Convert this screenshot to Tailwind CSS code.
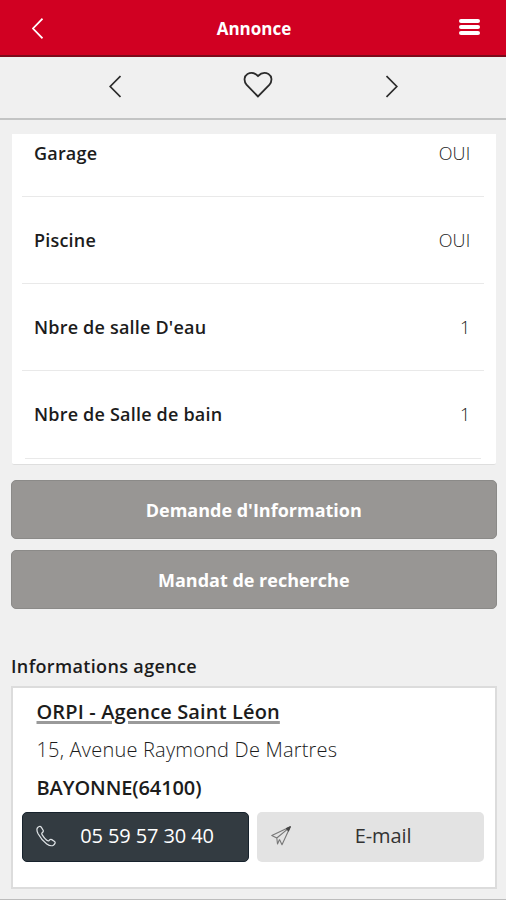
<!doctype html>
<html lang="fr">

<head>
  <meta charset="UTF-8" />
  <meta name="viewport" content="width=device-width, initial-scale=1.0" />
  <title>Annonce</title>
  <script src="https://cdn.jsdelivr.net/npm/@tailwindcss/browser@4"></script>
</head>

<body class="h-[900px] overflow-hidden bg-[#f0f0f0] font-['Open_Sans','Noto_Sans',sans-serif] text-[#1c1c1c]">
  <div class="flex h-full flex-col border-b border-[#bdbdbd]">
    <header class="grid h-[57px] shrink-0 grid-cols-3 items-center border-b-2 border-[#7d0a1b] bg-[#d10022] pl-8 pr-[26px] text-white">
      <svg class="mt-[2px] h-[21px] w-[11px]" viewBox="0 0 11 21" fill="none" stroke="currentColor" stroke-width="1.7">
        <path d="M10.5 .7 1 10.5l9.5 9.8" />
      </svg>
      <h1 class="pr-1 pt-[2px] text-center text-[17px] font-bold">Annonce</h1>
      <div class="flex flex-col gap-[2px] justify-self-end pb-px">
        <span class="h-1 w-[21px] rounded-xs bg-white"></span>
        <span class="h-1 w-[21px] rounded-xs bg-white"></span>
        <span class="h-1 w-[21px] rounded-xs bg-white"></span>
      </div>
    </header>

    <nav class="flex h-[63px] shrink-0 justify-between border-b-2 border-[#c3c4c4] pl-[109px] pr-[108px]">
      <svg class="mt-[18px] h-[23px] w-3" viewBox="0 0 12 23" fill="none" stroke="#2b2b2b" stroke-width="1.7">
        <path d="M11.5 1 1.2 11.5 11.5 22" />
      </svg>
      <svg class="ml-[9px] mt-[14px] h-[27px] w-[30px]" viewBox="0 0 30 27" fill="none" stroke="#2b2b2b" stroke-width="1.8">
        <path d="M15 25.500 3.700 14C.3 10 1.200 5 4.500 3 8.500.8 12.500 2.500 15 5c2.500-2.500 6.500-4.200 10.500-2 3.300 2 4.200 7 .8 11Z" />
      </svg>
      <svg class="mt-[18px] h-[23px] w-3" viewBox="0 0 12 23" fill="none" stroke="#2b2b2b" stroke-width="1.7">
        <path d="M.5 1 10.800 11.500.5 22" />
      </svg>
    </nav>

    <main class="pl-[11px] pr-[9.5px] pt-[14px]">
      <section class="ml-px mr-px flex h-[331px] flex-col rounded-b-xs border-b border-[#dedede] bg-white pl-[10px] pr-3 text-lg tracking-[0.2px]">
        <div class="flex h-[63px] shrink-0 justify-between border-b border-[#e9e9e9] pl-3 pr-[13px] pt-[5px]">
          <span class="font-semibold">Garage</span><span class="font-light">OUI</span>
        </div>
        <div class="flex h-[87px] shrink-0 items-center justify-between border-b border-[#e9e9e9] pl-3 pr-[13px]">
          <span class="font-semibold">Piscine</span><span class="font-light">OUI</span>
        </div>
        <div class="flex h-[87px] shrink-0 items-center justify-between border-b border-[#e9e9e9] pl-3 pr-[13px]">
          <span class="font-semibold">Nbre de salle D'eau</span><span class="font-light">1</span>
        </div>
        <div class="mx-[3px] flex h-[88px] shrink-0 items-center justify-between border-b border-[#e9e9e9] pl-[9px] pr-[10px] pb-px">
          <span class="font-semibold">Nbre de Salle de bain</span><span class="font-light">1</span>
        </div>
      </section>

      <div class="mt-[15px] flex flex-col gap-[11px] text-lg font-bold text-white">
        <button class="h-[59px] rounded-[5px] border border-[#8b8a88] bg-[#989694] pt-px">Demande d'Information</button>
        <button class="h-[59px] rounded-[5px] border border-[#8b8a88] bg-[#989694] pt-px">Mandat de recherche</button>
      </div>

      <h2 class="mt-[45px] text-lg leading-6 font-semibold tracking-[0.35px]">Informations agence</h2>

      <section class="mt-2 h-[203px] border-2 border-[#dcdcdc] bg-white px-[9px] pt-[5px]">
        <div class="pl-[14.5px] text-xl leading-[38px]">
          <p class="font-semibold tracking-[0.13px] underline decoration-[#9a9a9a] decoration-[3px] underline-offset-2">ORPI - Agence Saint Léon</p>
          <p class="font-light tracking-[0.2px]">15, Avenue Raymond De Martres</p>
          <p class="font-semibold tracking-[-0.1px]">BAYONNE(64100)</p>
        </div>
        <div class="mt-[5px] flex gap-2 text-xl tracking-[-0.1px]">
          <a class="flex h-[50px] w-[227px] items-center rounded-[5px] border border-[#17222c] bg-[#333b41] pb-[2px] pl-[13px] text-white">
            <svg class="h-[22px] w-[20px]" viewBox="0 0 21 22" fill="none" stroke="#dfe3e6" stroke-width="1.3">
              <path d="M1.500 2.500C2.500 1 4.500.3 5.500 1.700l2 3.200c.7 1.300-.2 2-1 2.600-.9.700-.5 1.500.2 2.600 1.300 2.100 2.800 3.900 4.600 5.400 1 .8 1.800 1 2.500.2.700-.9 1.500-1.600 2.700-.9l3 1.900c1.300 1 .3 2.900-1.200 3.900-2 1.300-4.600.4-7-1.300C7.700 16.700 4.500 13 2.200 8.700 1 6.300.4 4.200 1.500 2.500Z" />
            </svg>
            <span class="ml-[15px] w-[152px] text-center">05 59 57 30 40</span>
          </a>
          <a class="flex h-[50px] w-[227px] items-center rounded-[5px] bg-[#e3e3e3] pb-[2px] pl-[14px] text-[#333]">
            <svg class="h-5 w-5" viewBox="0 0 20 20" fill="none" stroke="#777" stroke-width="1.1" stroke-linejoin="round">
              <path d="M19.300.8.800 9.500l5 2.500L19.300.8 11 18.800l-2.500-5.300M5.800 12l.7 6 2-4.500" />
              <path d="M19.300.8 15.500 2.600l2 2.200Z" fill="#444" stroke="#444" />
            </svg>
            <span class="ml-[16px] w-[152px] text-center">E-mail</span>
          </a>
        </div>
      </section>
    </main>
  </div>
</body>

</html>
